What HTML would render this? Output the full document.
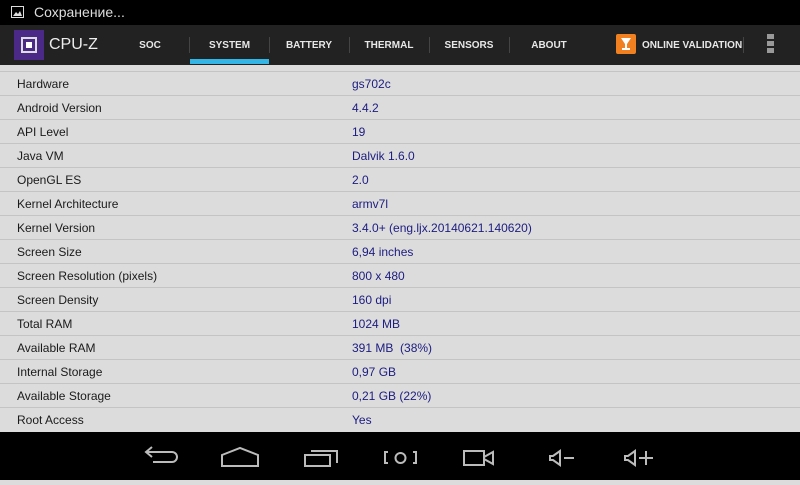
<!DOCTYPE html>
<html><head><meta charset="utf-8"><style>
*{margin:0;padding:0;box-sizing:border-box}
body{width:800px;height:480px;overflow:hidden;background:#dcdcdc;font-family:"Liberation Sans",sans-serif;position:relative}
#sb{position:absolute;left:0;top:0;width:800px;height:25px;background:#000;color:#ddd;font-size:14px}
#ab{position:absolute;left:0;top:25px;width:800px;height:40px;background:#222}
.tab{position:absolute;top:1px;height:40px;line-height:40px;color:#e8e8e8;font-size:10px;font-weight:bold;text-align:center;white-space:nowrap}
.sep{position:absolute;top:12px;width:1px;height:16px;background:#444}
.row{position:absolute;left:0;width:800px;height:24px;border-bottom:1px solid #c4c4c4;font-size:12px;line-height:25px}
.row .l{position:absolute;left:17px;color:#1a1a1a}
.row .v{position:absolute;left:352px;color:#1c1c80}
#nb{position:absolute;left:0;top:432px;width:800px;height:48px;background:#000}
</style></head><body>
<div id="sb">
<svg style="position:absolute;left:11px;top:6px" width="13" height="12"><rect x="0.5" y="0.5" width="12" height="11" fill="none" stroke="#ddd"/><path d="M2 10 L5 6 L7 8 L9 5 L11 10Z" fill="#ddd"/></svg>
<span style="position:absolute;left:34px;top:4px">Сохранение...</span></div>
<div style="position:absolute;left:0;top:65px;width:800px;height:7px;border-bottom:1px solid #c4c4c4"></div>
<div class="row" style="top:72px"><span class="l">Hardware</span><span class="v">gs702c</span></div>
<div class="row" style="top:96px"><span class="l">Android Version</span><span class="v">4.4.2</span></div>
<div class="row" style="top:120px"><span class="l">API Level</span><span class="v">19</span></div>
<div class="row" style="top:144px"><span class="l">Java VM</span><span class="v">Dalvik 1.6.0</span></div>
<div class="row" style="top:168px"><span class="l">OpenGL ES</span><span class="v">2.0</span></div>
<div class="row" style="top:192px"><span class="l">Kernel Architecture</span><span class="v">armv7l</span></div>
<div class="row" style="top:216px"><span class="l">Kernel Version</span><span class="v">3.4.0+ (eng.ljx.20140621.140620)</span></div>
<div class="row" style="top:240px"><span class="l">Screen Size</span><span class="v">6,94 inches</span></div>
<div class="row" style="top:264px"><span class="l">Screen Resolution (pixels)</span><span class="v">800 x 480</span></div>
<div class="row" style="top:288px"><span class="l">Screen Density</span><span class="v">160 dpi</span></div>
<div class="row" style="top:312px"><span class="l">Total RAM</span><span class="v">1024 MB</span></div>
<div class="row" style="top:336px"><span class="l">Available RAM</span><span class="v">391 MB &nbsp;(38%)</span></div>
<div class="row" style="top:360px"><span class="l">Internal Storage</span><span class="v">0,97 GB</span></div>
<div class="row" style="top:384px"><span class="l">Available Storage</span><span class="v">0,21 GB (22%)</span></div>
<div class="row" style="top:408px;border:none"><span class="l">Root Access</span><span class="v">Yes</span></div>
<div id="ab">
<div style="position:absolute;left:14px;top:5px;width:30px;height:30px;background:#4a2a86"><div style="position:absolute;left:7px;top:7px;width:16px;height:16px;border:2px solid #ddd"></div><div style="position:absolute;left:12px;top:12px;width:6px;height:6px;background:#fff"></div></div>
<span style="position:absolute;left:49px;top:11px;color:#eee;font-size:16px">CPU-Z</span>
<div class="tab" style="left:110px;width:80px">SOC</div>
<div class="sep" style="left:189px"></div>
<div class="tab" style="left:190px;width:79px">SYSTEM</div>
<div style="position:absolute;left:190px;top:34px;width:79px;height:5px;background:#33b5e5"></div>
<div class="sep" style="left:269px"></div>
<div class="tab" style="left:269px;width:80px">BATTERY</div>
<div class="sep" style="left:349px"></div>
<div class="tab" style="left:349px;width:80px">THERMAL</div>
<div class="sep" style="left:429px"></div>
<div class="tab" style="left:429px;width:80px">SENSORS</div>
<div class="sep" style="left:509px"></div>
<div class="tab" style="left:509px;width:80px">ABOUT</div>
<div style="position:absolute;left:616px;top:9px;width:20px;height:20px;background:#f08020;border-radius:2px"><svg width="20" height="20"><path d="M5 4 H15 L11 10 V14 H14 V16 H6 V14 H9 V10Z" fill="#fff"/></svg></div>
<div class="tab" style="left:642px;width:96px;text-align:left">ONLINE VALIDATION</div>
<div class="sep" style="left:743px"></div>
<div style="position:absolute;left:767px;top:9px;width:7px;height:5px;background:#999"></div>
<div style="position:absolute;left:767px;top:16px;width:7px;height:5px;background:#999"></div>
<div style="position:absolute;left:767px;top:23px;width:7px;height:5px;background:#999"></div>
</div>
<div id="nb"><svg width="800" height="48" fill="none" stroke="#bbb" stroke-width="2">
<path d="M146 20 H172 A5 5 0 0 1 172 30 H153 M152 15 L146 20 L152 25"/>
<path d="M222 34 V23 L240 16 L258 23 V34Z"/>
<path d="M305 23 H330 V34 H305Z M311 19 H337 V31"/>
<path d="M388 20 H385 V31 H388 M413 20 H416 V31 H413"/><circle cx="400.5" cy="26" r="5"/>
<path d="M464 19 H484 V33 H464Z M484 25 L493 20 V32 L484 27"/>
<path d="M560 19 L553 24 H550 V28 H553 L560 33Z M564 26 H574"/>
<path d="M635 19 L628 24 H625 V28 H628 L635 33Z M639 26 H653 M646 19 V33"/>
</svg></div>
</body></html>
